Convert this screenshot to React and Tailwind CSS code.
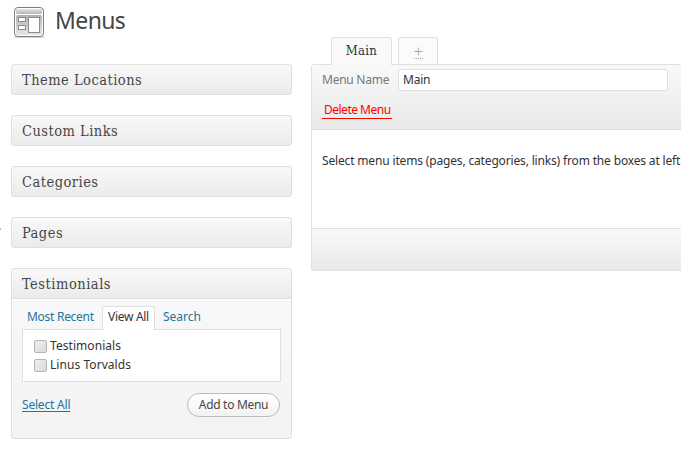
const sections = ['Theme Locations', 'Custom Links', 'Categories', 'Pages'];

function MenusIcon() {
  return (
    <svg width="32" height="32" viewBox="0 0 32 32" className="block shrink-0">
      <defs>
        <linearGradient id="bar" x1="0" y1="0" x2="0" y2="1">
          <stop offset="0" stopColor="#e4e4e4" />
          <stop offset="1" stopColor="#b4b4b4" />
        </linearGradient>
        <linearGradient id="body" x1="0" y1="0" x2="0" y2="1">
          <stop offset="0" stopColor="#b0b0b0" />
          <stop offset="1" stopColor="#e6e6e6" />
        </linearGradient>
      </defs>
      <rect x="1" y="29" width="30" height="2" rx="1" fill="#d8d8d8" />
      <rect x="1.5" y="0.5" width="29" height="29" rx="3.5" fill="#fff" stroke="#7d7d7d" />
      <rect x="3" y="2" width="26" height="5" rx="1" fill="url(#bar)" />
      <rect x="3" y="8" width="26" height="20" rx="1.5" fill="url(#body)" />
      <rect x="5.5" y="10.5" width="7" height="4" fill="#fff" stroke="#8d8d8d" />
      <rect x="5.5" y="18.5" width="7" height="4" fill="#fff" stroke="#8d8d8d" />
      <rect x="15.5" y="10.5" width="11" height="15" fill="#fff" stroke="#8d8d8d" />
    </svg>
  );
}

function Section({ title }) {
  return (
    <h3 className="flex h-[31px] items-center rounded-[3px] border border-[#dfdfdf] bg-linear-to-b from-[#f9f9f9] to-[#ebebeb] pt-[2px] pl-[10px] font-['DejaVu_Serif_Condensed','DejaVu_Serif',serif] text-[14.5px] leading-none tracking-[0.48px] text-[#464646]">
      {title}
    </h3>
  );
}

function CheckRow({ label }) {
  return (
    <label className="flex h-[19px] items-center gap-[3px] pl-[11px]">
      <span className="h-[13px] w-[13px] rounded-[2px] border border-[#b4b4b4] bg-linear-to-br from-[#efefef] to-[#dadada]" />
      <span className="pb-[2px] tracking-[0.06px]">{label}</span>
    </label>
  );
}

function Testimonials() {
  return (
    <section className="flex h-[171px] flex-col rounded-[3px] border border-[#dfdfdf] bg-linear-to-b from-[#f9f9f9] to-[#f3f3f3]">
      <h3 className="flex h-[30px] shrink-0 items-center rounded-t-[2px] border-b border-[#dfdfdf] bg-linear-to-b from-[#f9f9f9] to-[#ebebeb] pt-[2px] pl-[10px] font-['DejaVu_Serif_Condensed','DejaVu_Serif',serif] text-[14.5px] leading-none tracking-[0.52px] text-[#464646]">
        Testimonials
      </h3>
      <div className="border-t border-white px-[10px] pt-[6px]">
        <div className="relative z-10 -mb-px flex h-[24px] text-[#21759b]">
          <span className="w-[80px] pt-[2px] pl-[5px] tracking-[-0.28px]">Most Recent</span>
          <span className="w-[53px] rounded-t-[3px] border border-b-0 border-[#dfdfdf] bg-white pt-px pl-[5px] whitespace-nowrap tracking-[-0.3px] text-[#333]">View All</span>
          <span className="pt-[2px] pl-[8px] tracking-[0px]">Search</span>
        </div>
        <div className="h-[53px] border border-[#dfdfdf] bg-white pt-[7px] text-[#333]">
          <CheckRow label="Testimonials" />
          <CheckRow label="Linus Torvalds" />
        </div>
        <div className="mt-[11px] flex h-[24px] items-center justify-between pr-px">
          <a className="underline underline-offset-2 text-[#21759b]">Select All</a>
          <button className="h-[24px] w-[93px] rounded-full border border-[#bbb] bg-linear-to-b from-white to-[#f3f3f3] tracking-[-0.3px] text-[#464646]">Add to Menu</button>
        </div>
      </div>
    </section>
  );
}

function MenuEditor() {
  return (
    <main className="w-[400px] shrink-0 pt-[37px]">
      <div className="relative z-10 -mb-px flex h-[28px] gap-[6px] pl-[20px]">
        <span className="flex w-[61px] justify-center rounded-t-[3px] border border-b-0 border-[#dfdfdf] bg-[#f9f9f9] pt-[5px] font-['DejaVu_Serif_Condensed','DejaVu_Serif',serif] text-[13px] leading-[16px] tracking-[0.3px] text-[#333]">Main</span>
        <span className="mb-px flex w-[40px] justify-center rounded-t-[3px] border border-b-0 border-[#dfdfdf] bg-[#fbfbfb] pt-[6px] text-[#aaa]">
          <span className="h-[15px] w-[9px] border-b border-dotted border-[#aaa] text-center font-['Liberation_Serif',serif] text-[17px] leading-[15px]">+</span>
        </span>
      </div>
      <div className="rounded-[3px] border border-[#dfdfdf]">
        <header className="h-[65px] border-b border-[#dfdfdf] bg-linear-to-b from-[#f9f9f9] to-[#e9e9e9] pl-[10px]">
          <div className="flex pt-[4px]">
            <label className="w-[76px] pt-[2px] tracking-[-0.25px] text-[#777]">Menu Name</label>
            <span className="h-[22px] w-[270px] rounded-[3px] border border-[#dfdfdf] bg-white pt-px pl-[4px] text-[#333]">Main</span>
          </div>
          <a className="mt-[10px] flex h-[18px] w-[70px] border-b border-[#f00] pl-[2px] whitespace-nowrap tracking-[-0.5px] text-[#f00]">Delete Menu</a>
        </header>
        <p className="h-[98px] pt-[22px] pl-[10px] whitespace-nowrap tracking-[-0.16px] text-[#333]">Select menu items (pages, categories, links) from the boxes at left</p>
        <footer className="h-[42px] rounded-b-[2px] border-t border-[#dfdfdf] bg-linear-to-b from-[#f9f9f9] to-[#e9e9e9]" />
      </div>
    </main>
  );
}

export default function App() {
  return (
    <div className="flex h-[454px] w-[681px] overflow-hidden bg-white font-['Noto_Sans',sans-serif] text-[12px] leading-[18px] tracking-[-0.2px]">
      <div className="flex w-[11px] shrink-0 pt-[228px]">
        <i className="h-[2px] w-px bg-[#bbb]" />
      </div>
      <div className="w-[281px] shrink-0">
        <div className="flex h-[64px] gap-[10px] pt-[7px] pl-[2px]">
          <MenusIcon />
          <h1 className="text-[23px] leading-[27px] tracking-[-0.6px] text-[#464646]">Menus</h1>
        </div>
        <div className="flex flex-col gap-5">
          {sections.map((title) => <Section key={title} title={title} />)}
          <Testimonials />
        </div>
      </div>
      <div className="w-[19px] shrink-0" />
      <MenuEditor />
    </div>
  );
}
